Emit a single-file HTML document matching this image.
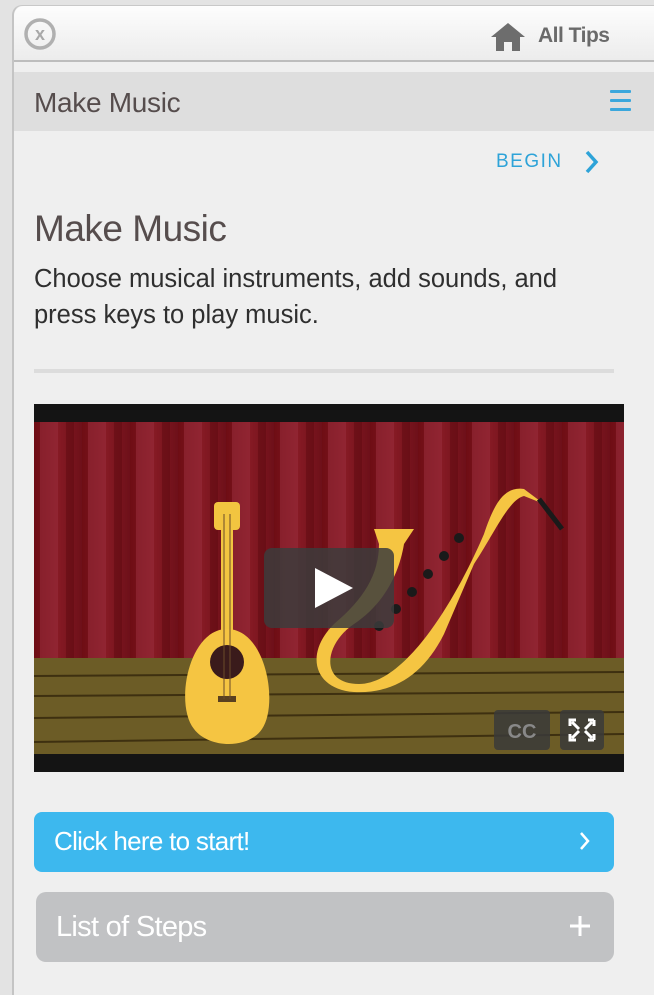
<!DOCTYPE html>
<html><head><meta charset="utf-8"><style>
*{margin:0;padding:0;box-sizing:border-box}
body{width:654px;height:984px;overflow:hidden;background:#e3e3e3;font-family:"Liberation Sans",sans-serif;position:relative}
#panel{position:absolute;left:12px;top:5px;width:650px;height:990px;background:#efefef;border-left:2px solid #c4c4c4;border-top:1px solid #c8c8c8;border-top-left-radius:10px}
#top{position:absolute;left:0;top:0;width:100%;height:56px;background:linear-gradient(#fdfdfd,#ececec);border-bottom:2px solid #bdbdbd;border-top-left-radius:10px}
.a{position:absolute}
</style></head><body>
<div id="panel">
<div id="top">
 <svg class="a" style="left:9px;top:11px" width="34" height="34"><circle cx="17" cy="17" r="14" fill="none" stroke="#b0b0b0" stroke-width="3.5"/><text x="17" y="23" font-family="Liberation Sans" font-weight="bold" font-size="18" fill="#a8a8a8" text-anchor="middle">x</text></svg>
 <svg class="a" style="left:476px;top:16px" width="36" height="30"><path d="M18 1 L35 15 H30 V29 H22 V20 H14 V29 H6 V15 H1 Z" fill="#6d6d6d"/></svg>
 <div class="a" style="left:524px;top:18px;font-size:21px;font-weight:bold;color:#6a6a6a;letter-spacing:-0.5px">All Tips</div>
</div>
</div>
<div class="a" style="left:14px;top:72px;width:640px;height:59px;background:#dedede"></div>
<div class="a" style="left:34px;top:87px;font-size:28px;color:#564d4d;letter-spacing:-0.3px">Make Music</div>
<div class="a" style="left:610px;top:90px;width:21px;height:3px;background:#3ba7dc;box-shadow:0 9px 0 #3ba7dc,0 18px 0 #3ba7dc;border-radius:1px"></div>
<div class="a" style="left:496px;top:151px;font-size:19px;color:#2ea3d8;letter-spacing:1.5px">BEGIN</div>
<svg class="a" style="left:584px;top:150px" width="16" height="24"><path d="M3 2 L12 12 L3 22" fill="none" stroke="#2ea3d8" stroke-width="3.5"/></svg>
<div class="a" style="left:34px;top:208px;font-size:37px;color:#564d4d;letter-spacing:-0.5px">Make Music</div>
<div class="a" style="left:34px;top:261px;font-size:25.5px;line-height:36px;color:#2f2f2f;width:570px">Choose musical instruments, add sounds, and press keys to play music.</div>
<div class="a" style="left:34px;top:369px;width:580px;height:4px;background:#dcdcdc"></div>
<svg class="a" style="left:34px;top:404px" width="590" height="368">
 <defs><linearGradient id="c" x1="0" x2="1"><stop offset="0" stop-color="#6e0d14"/><stop offset=".5" stop-color="#861a24"/><stop offset="1" stop-color="#6e1019"/></linearGradient>
 <pattern id="f" width="48" height="300" patternUnits="userSpaceOnUse"><rect width="48" height="300" fill="url(#c)"/><rect x="6" width="18" height="300" fill="#9c3040" opacity=".5"/><rect x="32" width="8" height="300" fill="#5e0a10" opacity=".5"/></pattern></defs>
 <rect width="590" height="368" fill="#141414"/>
 <rect y="18" width="590" height="236" fill="url(#f)"/>
 <rect y="254" width="590" height="96" fill="#6c5c26"/>
 <g stroke="#3e3010" stroke-width="2"><line x1="0" y1="272" x2="590" y2="268"/><line x1="0" y1="292" x2="590" y2="288"/><line x1="0" y1="314" x2="590" y2="308"/><line x1="0" y1="338" x2="590" y2="330"/></g>
 <rect x="187" y="110" width="12" height="130" fill="#f2c540"/>
 <rect x="180" y="98" width="26" height="28" rx="4" fill="#f2c540"/>
 <path d="M193 225 C155 225 140 300 160 325 C175 345 215 345 228 325 C245 300 232 225 193 225Z" fill="#f5c542"/>
 <circle cx="193" cy="258" r="17" fill="#3a1b1b"/>
 <rect x="184" y="292" width="18" height="6" fill="#5a4020"/>
 <g stroke="#6b4b2a" stroke-width="1"><line x1="190" y1="110" x2="190" y2="295"/><line x1="196" y1="110" x2="196" y2="295"/></g>
 <path d="M340 125 L380 125 L370 140 C365 170 350 200 320 220 C290 240 285 280 325 280 C370 280 420 200 450 130 C460 100 470 82 490 85 L510 100 L490 92 C475 95 460 130 440 160 L410 230 C390 270 360 290 320 288 C280 285 270 250 300 220 C330 195 345 170 345 140Z" fill="#f5c542"/>
 <g fill="#1a1a1a"><circle cx="345" cy="222" r="5"/><circle cx="362" cy="205" r="5"/><circle cx="378" cy="188" r="5"/><circle cx="394" cy="170" r="5"/><circle cx="410" cy="152" r="5"/><circle cx="425" cy="134" r="5"/></g>
 <path d="M505 95 L528 125" stroke="#1a1a1a" stroke-width="5"/>
 <rect x="230" y="144" width="130" height="80" rx="8" fill="#3c3c3c" opacity=".85"/>
 <path d="M281 164 L319 184 L281 204Z" fill="#fff"/>
 <rect x="460" y="306" width="56" height="40" rx="4" fill="#3a3a3a" opacity=".85"/>
 <text x="488" y="334" font-family="Liberation Sans" font-weight="bold" font-size="20" fill="#888" text-anchor="middle">CC</text>
 <rect x="526" y="306" width="44" height="40" rx="4" fill="#3a3a3a" opacity=".85"/>
 <g stroke="#fff" stroke-width="3" fill="none"><path d="M536 322 V316 H542 M560 316 H554 M560 316 V322 M536 330 V336 H542 M560 336 H554 M560 336 V330 M538 318 L545 325 M558 318 L551 325 M538 334 L545 327 M558 334 L551 327"/></g>
</svg>
<div class="a" style="left:34px;top:812px;width:580px;height:60px;background:#3db8ee;border-radius:8px"></div>
<div class="a" style="left:54px;top:826px;font-size:26px;color:#fff;letter-spacing:-0.7px">Click here to start!</div>
<svg class="a" style="left:578px;top:830px" width="14" height="22"><path d="M3 3 L10 11 L3 19" fill="none" stroke="#fff" stroke-width="2.5"/></svg>
<div class="a" style="left:36px;top:892px;width:578px;height:70px;background:#c1c2c4;border-radius:10px"></div>
<div class="a" style="left:56px;top:911px;font-size:29px;color:#fff;letter-spacing:-0.7px">List of Steps</div>
<svg class="a" style="left:568px;top:914px" width="24" height="24"><path d="M12 2V22M2 12H22" stroke="#fff" stroke-width="3"/></svg>
</body></html>
